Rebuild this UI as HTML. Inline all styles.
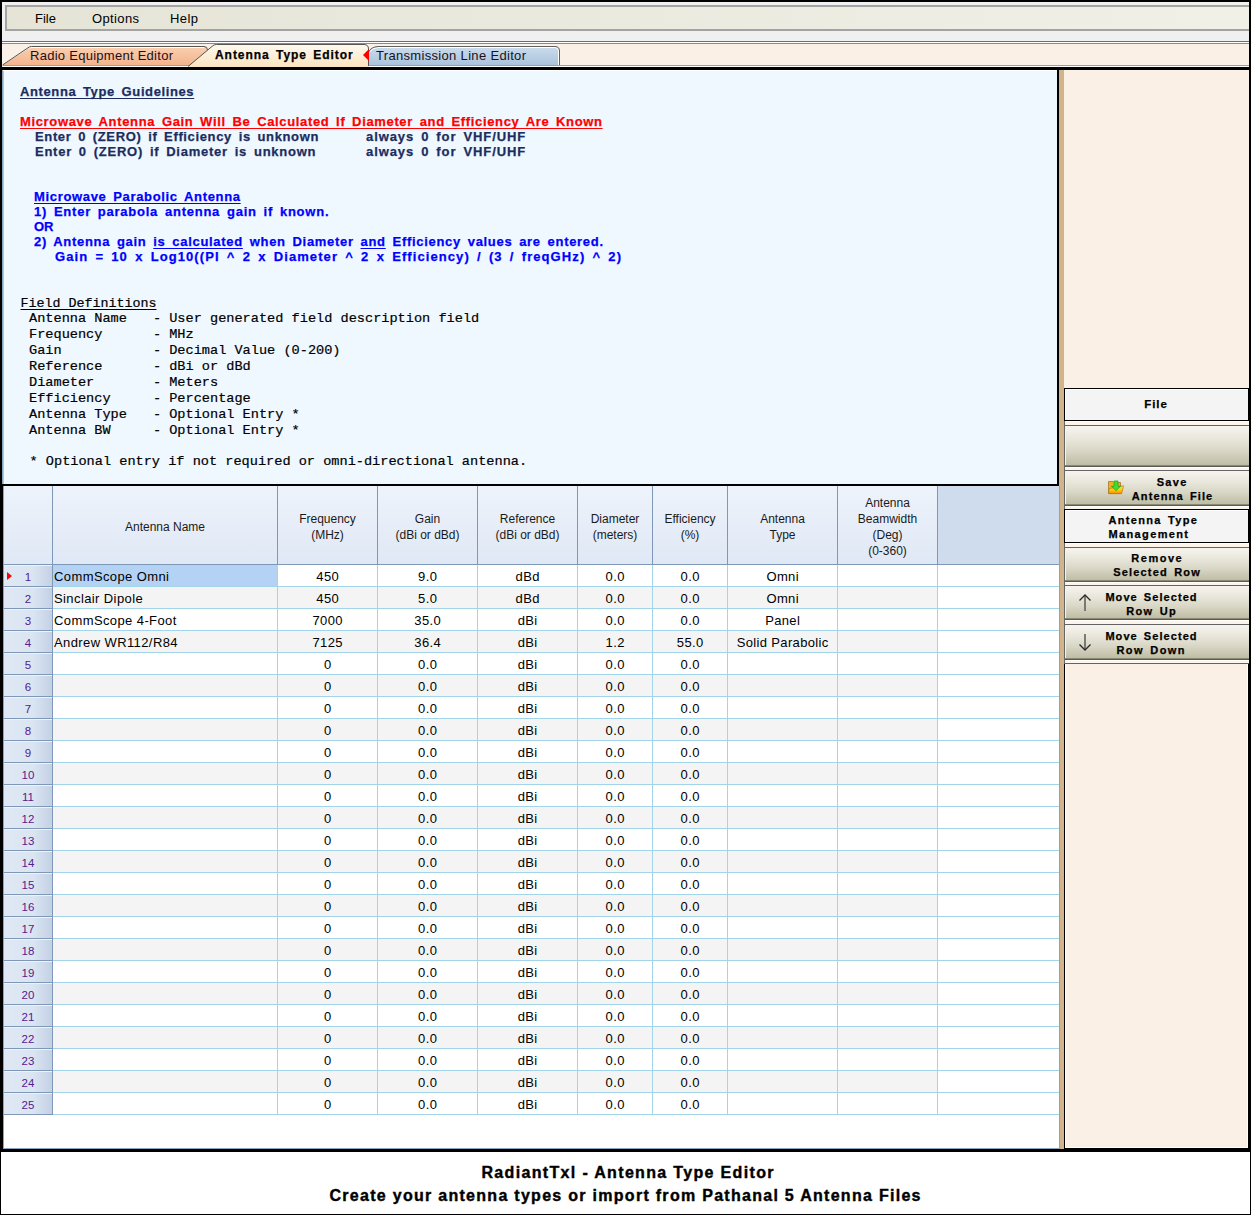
<!DOCTYPE html>
<html><head><meta charset="utf-8"><style>
html,body{margin:0;padding:0;width:1251px;height:1215px;overflow:hidden;background:#000}
.v{-webkit-text-stroke:0.25px currentColor}
.mo{-webkit-text-stroke:0.2px currentColor}
.t{position:absolute;line-height:0;white-space:pre;text-decoration-skip-ink:none;text-underline-offset:2px}
u{text-decoration-skip-ink:none;text-underline-offset:2px}
</style></head><body>
<div style="position:absolute;left:0px;top:0px;width:1251px;height:1215px;background:#000"></div>
<div style="position:absolute;left:2px;top:2px;width:1247px;height:39px;background:#f0f0f0"></div>
<div style="position:absolute;left:5px;top:5px;width:1244px;height:26px;background:linear-gradient(90deg,#e5e4d7,#f1f0e7);border:2px solid #a3a3a3;border-right:none;box-sizing:border-box"></div>
<div style="position:absolute;left:2px;top:41px;width:1247px;height:1px;background:#6e6e6e"></div>
<div style="position:absolute;left:2px;top:42px;width:1247px;height:1px;background:#ffffff"></div>
<div style="position:absolute;left:2px;top:43px;width:1247px;height:1px;background:#8a8a8a"></div>
<div style="position:absolute;left:2px;top:44px;width:1247px;height:23px;background:#faf0e6"></div>
<div style="position:absolute;left:3px;top:65px;width:1246px;height:1px;background:#7aa6c8"></div>
<div style="position:absolute;left:3px;top:66px;width:1246px;height:1px;background:#ffffff"></div>
<div style="position:absolute;left:0px;top:67px;width:1251px;height:3px;background:#000"></div>
<div class="t" id="m_file" style="left:35px;top:18.50px;font-size:13px;font-family:'Liberation Sans', sans-serif;font-weight:normal;color:#000;letter-spacing:0.015px;word-spacing:0px;">File</div>
<div class="t" id="m_opt" style="left:92px;top:18.50px;font-size:13px;font-family:'Liberation Sans', sans-serif;font-weight:normal;color:#000;letter-spacing:0.365px;word-spacing:0px;">Options</div>
<div class="t" id="m_help" style="left:170px;top:18.50px;font-size:13px;font-family:'Liberation Sans', sans-serif;font-weight:normal;color:#000;letter-spacing:0.42px;word-spacing:0px;">Help</div>
<svg style="position:absolute;left:0;top:40px" width="600" height="28" viewBox="0 40 600 28">
<defs>
<linearGradient id="gR" x1="0" y1="0" x2="0" y2="1"><stop offset="0" stop-color="#f9d0b2"/><stop offset="1" stop-color="#f4b48c"/></linearGradient>
<linearGradient id="gA" x1="0" y1="0" x2="0" y2="1"><stop offset="0" stop-color="#fef9ef"/><stop offset="1" stop-color="#fbe4c0"/></linearGradient>
<linearGradient id="gT" x1="0" y1="0" x2="0" y2="1"><stop offset="0" stop-color="#cbdcec"/><stop offset="1" stop-color="#aac4dc"/></linearGradient>
</defs>
<path d="M2.5,65 L28,47.8 Q29.5,46.5 31.5,46.5 L204,46.5 Q207.5,46.5 207.5,50 L207.5,65 Z" fill="url(#gR)"/>
<path d="M3.5,64 L28.5,48 Q30,47.5 32,47.5 L204,47.5" fill="none" stroke="#ffffff" stroke-width="1"/>
<path d="M2.5,65 L28,47.8 Q29.5,46.5 31.5,46.5 L204,46.5 Q207.5,46.5 207.5,50" fill="none" stroke="#555555" stroke-width="1"/>
<path d="M368.5,52 Q371,47 378,46.5 L555,46.5 Q559.5,46.5 559.5,51 L559.5,65 L368.5,65 Z" fill="url(#gT)"/>
<path d="M369.5,52 Q372,48 378,47.5 L555,47.5 Q558.5,47.5 558.5,51 L558.5,65" fill="none" stroke="#ffffff" stroke-width="1"/>
<path d="M368.5,52 Q371,47 378,46.5 L555,46.5 Q559.5,46.5 559.5,51 L559.5,65" fill="none" stroke="#606060" stroke-width="1"/>
<path d="M188,67 L213,45.6 Q214.5,44.5 216.5,44.5 L364,44.5 Q368.5,44.5 368.5,49 L368.5,67 Z" fill="url(#gA)"/>
<path d="M188,66.5 L213,45.6 Q214.5,44.5 216.5,44.5 L364,44.5 Q368.5,44.5 368.5,49 L368.5,66" fill="none" stroke="#555555" stroke-width="1"/>
<path d="M363,55 L369,49 L369,61 Z" fill="#ff0000"/>
</svg>
<div class="t" id="tab1" style="left:30px;top:55.50px;font-size:13px;font-family:'Liberation Sans', sans-serif;font-weight:normal;color:#1a1020;letter-spacing:0.271px;word-spacing:0px;">Radio Equipment Editor</div>
<div class="t v" id="tab2" style="left:215px;top:54.84px;font-size:12px;font-family:'Liberation Sans', sans-serif;font-weight:bold;color:#000;letter-spacing:0.958px;word-spacing:2px;">Antenna Type Editor</div>
<div class="t" id="tab3" style="left:376px;top:55.50px;font-size:13px;font-family:'Liberation Sans', sans-serif;font-weight:normal;color:#1a1020;letter-spacing:0.322px;word-spacing:0px;">Transmission Line Editor</div>
<div style="position:absolute;left:2px;top:70px;width:1055px;height:415px;background:#f0f8ff"></div>
<div style="position:absolute;left:2px;top:70px;width:1px;height:415px;background:#8aa4bc"></div>
<div style="position:absolute;left:3px;top:70px;width:1px;height:415px;background:#a8c8e8"></div>
<div style="position:absolute;left:3px;top:70px;width:1054px;height:1px;background:#ffffff"></div>
<div style="position:absolute;left:1057px;top:67px;width:2px;height:419px;background:#000"></div>
<div style="position:absolute;left:2px;top:484px;width:1057px;height:2px;background:#000"></div>
<div class="t v" id="g1" style="left:20px;top:91.50px;font-size:13px;font-family:'Liberation Sans', sans-serif;font-weight:bold;color:#1b2d60;letter-spacing:0.615px;word-spacing:2.5px;text-decoration:underline;text-underline-offset:2px">Antenna Type Guidelines</div>
<div class="t v" id="g2" style="left:20px;top:121.50px;font-size:13px;font-family:'Liberation Sans', sans-serif;font-weight:bold;color:#ff0000;letter-spacing:0.648px;word-spacing:2.5px;text-decoration:underline;text-underline-offset:2px">Microwave Antenna Gain Will Be Calculated If Diameter and Efficiency Are Known</div>
<div class="t v" id="g3" style="left:35px;top:136.50px;font-size:13px;font-family:'Liberation Sans', sans-serif;font-weight:bold;color:#1b2d60;letter-spacing:0.638px;word-spacing:2.5px;">Enter 0 (ZERO) if Efficiency is unknown</div>
<div class="t v" id="g4" style="left:366px;top:136.50px;font-size:13px;font-family:'Liberation Sans', sans-serif;font-weight:bold;color:#1b2d60;letter-spacing:0.917px;word-spacing:2.5px;">always 0 for VHF/UHF</div>
<div class="t v" id="g5" style="left:35px;top:151.50px;font-size:13px;font-family:'Liberation Sans', sans-serif;font-weight:bold;color:#1b2d60;letter-spacing:0.754px;word-spacing:2.5px;">Enter 0 (ZERO) if Diameter is unknown</div>
<div class="t v" id="g6" style="left:366px;top:151.50px;font-size:13px;font-family:'Liberation Sans', sans-serif;font-weight:bold;color:#1b2d60;letter-spacing:0.917px;word-spacing:2.5px;">always 0 for VHF/UHF</div>
<div class="t v" id="g7" style="left:34px;top:196.50px;font-size:13px;font-family:'Liberation Sans', sans-serif;font-weight:bold;color:#0000ff;letter-spacing:0.664px;word-spacing:2.5px;text-decoration:underline;text-underline-offset:2px">Microwave Parabolic Antenna</div>
<div class="t v" id="g8" style="left:34px;top:211.50px;font-size:13px;font-family:'Liberation Sans', sans-serif;font-weight:bold;color:#0000ff;letter-spacing:0.758px;word-spacing:2.5px;">1) Enter parabola antenna gain if known.</div>
<div class="t v" id="g9" style="left:34px;top:226.50px;font-size:13px;font-family:'Liberation Sans', sans-serif;font-weight:bold;color:#0000ff;letter-spacing:0px;word-spacing:2.5px;">OR</div>

<div class="t v" id="g10" style="left:34px;top:241.50px;font-size:13px;font-family:'Liberation Sans', sans-serif;font-weight:bold;color:#0000ff;letter-spacing:0.696px;word-spacing:2.5px;">2) Antenna gain <u>is calculated</u> when Diameter <u>and</u> Efficiency values are entered.</div>
<div class="t v" id="g11" style="left:55px;top:256.50px;font-size:13px;font-family:'Liberation Sans', sans-serif;font-weight:bold;color:#0000ff;letter-spacing:1.085px;word-spacing:2.5px;">Gain = 10 x Log10((PI ^ 2 x Diameter ^ 2 x Efficiency) / (3 / freqGHz) ^ 2)</div>
<div class="t mo" id="f0" style="left:20.5px;top:304.45px;font-size:13.33px;font-family:'Liberation Mono', monospace;font-weight:normal;color:#000;letter-spacing:0px;word-spacing:0px;text-decoration:underline;text-underline-offset:2px">Field Definitions</div>
<div class="t mo" id="fn0" style="left:29px;top:319.38px;font-size:13.6px;font-family:'Liberation Mono', monospace;font-weight:normal;color:#000;letter-spacing:0px;word-spacing:0px;">Antenna Name</div>
<div class="t mo" id="fd0" style="left:152.9px;top:319.38px;font-size:13.6px;font-family:'Liberation Mono', monospace;font-weight:normal;color:#000;letter-spacing:0px;word-spacing:0px;">- User generated field description field</div>
<div class="t mo" id="fn1" style="left:29px;top:335.38px;font-size:13.6px;font-family:'Liberation Mono', monospace;font-weight:normal;color:#000;letter-spacing:0px;word-spacing:0px;">Frequency</div>
<div class="t mo" id="fd1" style="left:152.9px;top:335.38px;font-size:13.6px;font-family:'Liberation Mono', monospace;font-weight:normal;color:#000;letter-spacing:0px;word-spacing:0px;">- MHz</div>
<div class="t mo" id="fn2" style="left:29px;top:351.38px;font-size:13.6px;font-family:'Liberation Mono', monospace;font-weight:normal;color:#000;letter-spacing:0px;word-spacing:0px;">Gain</div>
<div class="t mo" id="fd2" style="left:152.9px;top:351.38px;font-size:13.6px;font-family:'Liberation Mono', monospace;font-weight:normal;color:#000;letter-spacing:0px;word-spacing:0px;">- Decimal Value (0-200)</div>
<div class="t mo" id="fn3" style="left:29px;top:367.38px;font-size:13.6px;font-family:'Liberation Mono', monospace;font-weight:normal;color:#000;letter-spacing:0px;word-spacing:0px;">Reference</div>
<div class="t mo" id="fd3" style="left:152.9px;top:367.38px;font-size:13.6px;font-family:'Liberation Mono', monospace;font-weight:normal;color:#000;letter-spacing:0px;word-spacing:0px;">- dBi or dBd</div>
<div class="t mo" id="fn4" style="left:29px;top:383.38px;font-size:13.6px;font-family:'Liberation Mono', monospace;font-weight:normal;color:#000;letter-spacing:0px;word-spacing:0px;">Diameter</div>
<div class="t mo" id="fd4" style="left:152.9px;top:383.38px;font-size:13.6px;font-family:'Liberation Mono', monospace;font-weight:normal;color:#000;letter-spacing:0px;word-spacing:0px;">- Meters</div>
<div class="t mo" id="fn5" style="left:29px;top:399.38px;font-size:13.6px;font-family:'Liberation Mono', monospace;font-weight:normal;color:#000;letter-spacing:0px;word-spacing:0px;">Efficiency</div>
<div class="t mo" id="fd5" style="left:152.9px;top:399.38px;font-size:13.6px;font-family:'Liberation Mono', monospace;font-weight:normal;color:#000;letter-spacing:0px;word-spacing:0px;">- Percentage</div>
<div class="t mo" id="fn6" style="left:29px;top:415.38px;font-size:13.6px;font-family:'Liberation Mono', monospace;font-weight:normal;color:#000;letter-spacing:0px;word-spacing:0px;">Antenna Type</div>
<div class="t mo" id="fd6" style="left:152.9px;top:415.38px;font-size:13.6px;font-family:'Liberation Mono', monospace;font-weight:normal;color:#000;letter-spacing:0px;word-spacing:0px;">- Optional Entry *</div>
<div class="t mo" id="fn7" style="left:29px;top:431.38px;font-size:13.6px;font-family:'Liberation Mono', monospace;font-weight:normal;color:#000;letter-spacing:0px;word-spacing:0px;">Antenna BW</div>
<div class="t mo" id="fd7" style="left:152.9px;top:431.38px;font-size:13.6px;font-family:'Liberation Mono', monospace;font-weight:normal;color:#000;letter-spacing:0px;word-spacing:0px;">- Optional Entry *</div>
<div class="t mo" id="f9" style="left:29.5px;top:462.38px;font-size:13.6px;font-family:'Liberation Mono', monospace;font-weight:normal;color:#000;letter-spacing:0px;word-spacing:0px;">* Optional entry if not required or omni-directional antenna.</div>
<div style="position:absolute;left:1059px;top:70px;width:190px;height:1079px;background:#faf0e6"></div>
<div style="position:absolute;left:1060px;top:70px;width:4px;height:1079px;background:#d2b48c"></div>
<div style="position:absolute;left:1059px;top:70px;width:1px;height:416px;background:#d2b48c"></div>
<div style="position:absolute;left:1064px;top:388px;width:185px;height:33px;background:#000"></div>
<div style="position:absolute;left:1065px;top:389px;width:183px;height:31px;background:#f4f4f4"></div>
<div style="position:absolute;left:1065px;top:389px;width:183px;height:1px;background:#ffffff"></div>
<div style="position:absolute;left:1065px;top:389px;width:1px;height:31px;background:#ffffff"></div>
<div style="position:absolute;left:1064px;top:421px;width:185px;height:4px;background:#fdf4ea"></div>
<div style="position:absolute;left:1065px;top:421px;width:184px;height:1px;background:#ffffff"></div>
<div style="position:absolute;left:1064px;top:421px;width:1px;height:4px;background:#666666"></div>
<div style="position:absolute;left:1064px;top:425px;width:185px;height:42px;background:linear-gradient(#f8f6f0 0%,#e8e6da 35%,#d6d4c2 65%,#bab99f 100%)"></div>
<div style="position:absolute;left:1064px;top:425px;width:185px;height:1px;background:#646464"></div>
<div style="position:absolute;left:1064px;top:465px;width:185px;height:1px;background:#8a8a74"></div>
<div style="position:absolute;left:1064px;top:466px;width:185px;height:1px;background:#5a5a5a"></div>
<div style="position:absolute;left:1064px;top:425px;width:1px;height:42px;background:#666666"></div>
<div style="position:absolute;left:1065px;top:426px;width:1px;height:39px;background:#f4f4ee"></div>
<div style="position:absolute;left:1064px;top:467px;width:185px;height:3px;background:#fdf4ea"></div>
<div style="position:absolute;left:1065px;top:467px;width:184px;height:1px;background:#ffffff"></div>
<div style="position:absolute;left:1064px;top:467px;width:1px;height:3px;background:#666666"></div>
<div style="position:absolute;left:1064px;top:470px;width:185px;height:36px;background:linear-gradient(#f8f6f0 0%,#e8e6da 35%,#d6d4c2 65%,#bab99f 100%)"></div>
<div style="position:absolute;left:1064px;top:470px;width:185px;height:1px;background:#646464"></div>
<div style="position:absolute;left:1064px;top:504px;width:185px;height:1px;background:#8a8a74"></div>
<div style="position:absolute;left:1064px;top:505px;width:185px;height:1px;background:#5a5a5a"></div>
<div style="position:absolute;left:1064px;top:470px;width:1px;height:36px;background:#666666"></div>
<div style="position:absolute;left:1065px;top:471px;width:1px;height:33px;background:#f4f4ee"></div>
<div style="position:absolute;left:1064px;top:506px;width:185px;height:3px;background:#fdf4ea"></div>
<div style="position:absolute;left:1065px;top:506px;width:184px;height:1px;background:#ffffff"></div>
<div style="position:absolute;left:1064px;top:506px;width:1px;height:3px;background:#666666"></div>
<div style="position:absolute;left:1064px;top:509px;width:185px;height:34px;background:#000"></div>
<div style="position:absolute;left:1065px;top:510px;width:183px;height:32px;background:#f4f4f4"></div>
<div style="position:absolute;left:1065px;top:510px;width:183px;height:1px;background:#ffffff"></div>
<div style="position:absolute;left:1065px;top:510px;width:1px;height:32px;background:#ffffff"></div>
<div style="position:absolute;left:1064px;top:543px;width:185px;height:4px;background:#fdf4ea"></div>
<div style="position:absolute;left:1065px;top:543px;width:184px;height:1px;background:#ffffff"></div>
<div style="position:absolute;left:1064px;top:543px;width:1px;height:4px;background:#666666"></div>
<div style="position:absolute;left:1064px;top:547px;width:185px;height:35px;background:linear-gradient(#f8f6f0 0%,#e8e6da 35%,#d6d4c2 65%,#bab99f 100%)"></div>
<div style="position:absolute;left:1064px;top:547px;width:185px;height:1px;background:#646464"></div>
<div style="position:absolute;left:1064px;top:580px;width:185px;height:1px;background:#8a8a74"></div>
<div style="position:absolute;left:1064px;top:581px;width:185px;height:1px;background:#5a5a5a"></div>
<div style="position:absolute;left:1064px;top:547px;width:1px;height:35px;background:#666666"></div>
<div style="position:absolute;left:1065px;top:548px;width:1px;height:32px;background:#f4f4ee"></div>
<div style="position:absolute;left:1064px;top:582px;width:185px;height:3px;background:#fdf4ea"></div>
<div style="position:absolute;left:1065px;top:582px;width:184px;height:1px;background:#ffffff"></div>
<div style="position:absolute;left:1064px;top:582px;width:1px;height:3px;background:#666666"></div>
<div style="position:absolute;left:1064px;top:585px;width:185px;height:35px;background:linear-gradient(#f8f6f0 0%,#e8e6da 35%,#d6d4c2 65%,#bab99f 100%)"></div>
<div style="position:absolute;left:1064px;top:585px;width:185px;height:1px;background:#646464"></div>
<div style="position:absolute;left:1064px;top:618px;width:185px;height:1px;background:#8a8a74"></div>
<div style="position:absolute;left:1064px;top:619px;width:185px;height:1px;background:#5a5a5a"></div>
<div style="position:absolute;left:1064px;top:585px;width:1px;height:35px;background:#666666"></div>
<div style="position:absolute;left:1065px;top:586px;width:1px;height:32px;background:#f4f4ee"></div>
<div style="position:absolute;left:1064px;top:620px;width:185px;height:4px;background:#fdf4ea"></div>
<div style="position:absolute;left:1065px;top:620px;width:184px;height:1px;background:#ffffff"></div>
<div style="position:absolute;left:1064px;top:620px;width:1px;height:4px;background:#666666"></div>
<div style="position:absolute;left:1064px;top:624px;width:185px;height:36px;background:linear-gradient(#f8f6f0 0%,#e8e6da 35%,#d6d4c2 65%,#bab99f 100%)"></div>
<div style="position:absolute;left:1064px;top:624px;width:185px;height:1px;background:#646464"></div>
<div style="position:absolute;left:1064px;top:658px;width:185px;height:1px;background:#8a8a74"></div>
<div style="position:absolute;left:1064px;top:659px;width:185px;height:1px;background:#5a5a5a"></div>
<div style="position:absolute;left:1064px;top:624px;width:1px;height:36px;background:#666666"></div>
<div style="position:absolute;left:1065px;top:625px;width:1px;height:33px;background:#f4f4ee"></div>
<div style="position:absolute;left:1064px;top:660px;width:185px;height:4px;background:#fdf4ea"></div>
<div style="position:absolute;left:1065px;top:660px;width:184px;height:1px;background:#ffffff"></div>
<div style="position:absolute;left:1064px;top:660px;width:1px;height:4px;background:#666666"></div>
<div style="position:absolute;left:1064px;top:663px;width:185px;height:1px;background:#646464"></div>
<div style="position:absolute;left:1064px;top:664px;width:185px;height:485px;background:#000"></div>
<div style="position:absolute;left:1065px;top:664px;width:183px;height:484px;background:#ffffff"></div>
<div style="position:absolute;left:1066px;top:664px;width:181px;height:483px;background:#faf0e6"></div>
<div class="t v" id="b_file" style="left:755.98px;width:800px;text-align:center;top:404.02px;font-size:11.5px;font-family:'Liberation Sans', sans-serif;font-weight:bold;color:#000;letter-spacing:0.961px;word-spacing:2px;">File</div>
<div class="t v" id="b_s1" style="left:772.17px;width:800px;text-align:center;top:481.79px;font-size:11px;font-family:'Liberation Sans', sans-serif;font-weight:bold;color:#000;letter-spacing:1.333px;word-spacing:2px;">Save</div>
<div class="t v" id="b_s2" style="left:772.57px;width:800px;text-align:center;top:495.79px;font-size:11px;font-family:'Liberation Sans', sans-serif;font-weight:bold;color:#000;letter-spacing:1.136px;word-spacing:2px;">Antenna File</div>
<div class="t v" id="b_t1" style="left:1108.5px;top:519.69px;font-size:11px;font-family:'Liberation Sans', sans-serif;font-weight:bold;color:#000;letter-spacing:1.308px;word-spacing:2px;">Antenna Type</div>
<div class="t v" id="b_t2" style="left:1108.5px;top:533.69px;font-size:11px;font-family:'Liberation Sans', sans-serif;font-weight:bold;color:#000;letter-spacing:1.362px;word-spacing:2px;">Management</div>
<div class="t v" id="b_r1" style="left:757.25px;width:800px;text-align:center;top:557.79px;font-size:11px;font-family:'Liberation Sans', sans-serif;font-weight:bold;color:#000;letter-spacing:1.499px;word-spacing:2px;">Remove</div>
<div class="t v" id="b_r2" style="left:757.10px;width:800px;text-align:center;top:571.89px;font-size:11px;font-family:'Liberation Sans', sans-serif;font-weight:bold;color:#000;letter-spacing:1.197px;word-spacing:2px;">Selected Row</div>
<div class="t v" id="b_u1" style="left:751.53px;width:800px;text-align:center;top:596.79px;font-size:11px;font-family:'Liberation Sans', sans-serif;font-weight:bold;color:#000;letter-spacing:1.065px;word-spacing:2px;">Move Selected</div>
<div class="t v" id="b_u2" style="left:751.67px;width:800px;text-align:center;top:610.89px;font-size:11px;font-family:'Liberation Sans', sans-serif;font-weight:bold;color:#000;letter-spacing:1.334px;word-spacing:2px;">Row Up</div>
<div class="t v" id="b_d1" style="left:751.53px;width:800px;text-align:center;top:635.79px;font-size:11px;font-family:'Liberation Sans', sans-serif;font-weight:bold;color:#000;letter-spacing:1.065px;word-spacing:2px;">Move Selected</div>
<div class="t v" id="b_d2" style="left:751.21px;width:800px;text-align:center;top:649.89px;font-size:11px;font-family:'Liberation Sans', sans-serif;font-weight:bold;color:#000;letter-spacing:1.411px;word-spacing:2px;">Row Down</div>
<svg style="position:absolute;left:1076px;top:592px" width="18" height="22"><path d="M9,3 L9,19" stroke="#606060" stroke-width="1.6" fill="none"/><path d="M3.5,8.5 L9,3 L14.5,8.5" stroke="#2a2a2a" stroke-width="1.3" fill="none"/></svg>
<svg style="position:absolute;left:1076px;top:631px" width="18" height="22"><path d="M9,3 L9,19" stroke="#606060" stroke-width="1.6" fill="none"/><path d="M3.5,13.5 L9,19 L14.5,13.5" stroke="#2a2a2a" stroke-width="1.3" fill="none"/></svg>
<svg style="position:absolute;left:1100px;top:472px" width="32" height="28"><defs><linearGradient id="fF" x1="0" y1="0" x2="0" y2="1"><stop offset="0" stop-color="#ffe84a"/><stop offset="0.6" stop-color="#ffc20a"/><stop offset="1" stop-color="#f08a00"/></linearGradient></defs><path d="M8.5,9.5 L13,9.5 L14,10.5 L20.5,10.5 L20.5,21.5 L8.5,21.5 Z" fill="#f2b21e" stroke="#a8782a" stroke-width="0.8"/><path d="M9.2,16.6 L23.5,13.8 L21.6,21.7 L8.6,21.7 Z" fill="url(#fF)" stroke="#b07a20" stroke-width="0.7"/><path d="M14,9 L18,9 L18,14.3 L20.6,14.3 L16,18.6 L11.4,14.3 L14,14.3 Z" fill="#44dc2c" stroke="#14a022" stroke-width="0.7"/></svg>
<div style="position:absolute;left:3px;top:486px;width:1057px;height:663px;background:#ffffff"></div>
<div style="position:absolute;left:3px;top:486px;width:1px;height:663px;background:#8aa4bc"></div>
<div style="position:absolute;left:1059px;top:486px;width:1px;height:663px;background:#8aa4bc"></div>
<div style="position:absolute;left:4px;top:486px;width:1055px;height:78px;background:linear-gradient(#eef3fb,#dfe8f5)"></div>
<div style="position:absolute;left:938px;top:486px;width:121px;height:78px;background:#cfdced"></div>
<div style="position:absolute;left:4px;top:564px;width:1055px;height:1px;background:#8098b8"></div>
<div style="position:absolute;left:52px;top:486px;width:1px;height:78px;background:#8098b8"></div>
<div style="position:absolute;left:277px;top:486px;width:1px;height:78px;background:#8098b8"></div>
<div style="position:absolute;left:377px;top:486px;width:1px;height:78px;background:#8098b8"></div>
<div style="position:absolute;left:477px;top:486px;width:1px;height:78px;background:#8098b8"></div>
<div style="position:absolute;left:577px;top:486px;width:1px;height:78px;background:#8098b8"></div>
<div style="position:absolute;left:652px;top:486px;width:1px;height:78px;background:#8098b8"></div>
<div style="position:absolute;left:727px;top:486px;width:1px;height:78px;background:#8098b8"></div>
<div style="position:absolute;left:837px;top:486px;width:1px;height:78px;background:#8098b8"></div>
<div style="position:absolute;left:937px;top:486px;width:1px;height:78px;background:#8098b8"></div>
<div class="t" id="t46" style="left:-235.00px;width:800px;text-align:center;top:526.84px;font-size:12px;font-family:'Liberation Sans', sans-serif;font-weight:normal;color:#1a1a1a;letter-spacing:0px;word-spacing:0px;">Antenna Name</div>
<div class="t" id="t47" style="left:-72.50px;width:800px;text-align:center;top:518.84px;font-size:12px;font-family:'Liberation Sans', sans-serif;font-weight:normal;color:#1a1a1a;letter-spacing:0px;word-spacing:0px;">Frequency</div>
<div class="t" id="t48" style="left:-72.50px;width:800px;text-align:center;top:534.84px;font-size:12px;font-family:'Liberation Sans', sans-serif;font-weight:normal;color:#1a1a1a;letter-spacing:0px;word-spacing:0px;">(MHz)</div>
<div class="t" id="t49" style="left:27.50px;width:800px;text-align:center;top:518.84px;font-size:12px;font-family:'Liberation Sans', sans-serif;font-weight:normal;color:#1a1a1a;letter-spacing:0px;word-spacing:0px;">Gain</div>
<div class="t" id="t50" style="left:27.50px;width:800px;text-align:center;top:534.84px;font-size:12px;font-family:'Liberation Sans', sans-serif;font-weight:normal;color:#1a1a1a;letter-spacing:0px;word-spacing:0px;">(dBi or dBd)</div>
<div class="t" id="t51" style="left:127.50px;width:800px;text-align:center;top:518.84px;font-size:12px;font-family:'Liberation Sans', sans-serif;font-weight:normal;color:#1a1a1a;letter-spacing:0px;word-spacing:0px;">Reference</div>
<div class="t" id="t52" style="left:127.50px;width:800px;text-align:center;top:534.84px;font-size:12px;font-family:'Liberation Sans', sans-serif;font-weight:normal;color:#1a1a1a;letter-spacing:0px;word-spacing:0px;">(dBi or dBd)</div>
<div class="t" id="t53" style="left:215.00px;width:800px;text-align:center;top:518.84px;font-size:12px;font-family:'Liberation Sans', sans-serif;font-weight:normal;color:#1a1a1a;letter-spacing:0px;word-spacing:0px;">Diameter</div>
<div class="t" id="t54" style="left:215.00px;width:800px;text-align:center;top:534.84px;font-size:12px;font-family:'Liberation Sans', sans-serif;font-weight:normal;color:#1a1a1a;letter-spacing:0px;word-spacing:0px;">(meters)</div>
<div class="t" id="t55" style="left:290.00px;width:800px;text-align:center;top:518.84px;font-size:12px;font-family:'Liberation Sans', sans-serif;font-weight:normal;color:#1a1a1a;letter-spacing:0px;word-spacing:0px;">Efficiency</div>
<div class="t" id="t56" style="left:290.00px;width:800px;text-align:center;top:534.84px;font-size:12px;font-family:'Liberation Sans', sans-serif;font-weight:normal;color:#1a1a1a;letter-spacing:0px;word-spacing:0px;">(%)</div>
<div class="t" id="t57" style="left:382.50px;width:800px;text-align:center;top:518.84px;font-size:12px;font-family:'Liberation Sans', sans-serif;font-weight:normal;color:#1a1a1a;letter-spacing:0px;word-spacing:0px;">Antenna</div>
<div class="t" id="t58" style="left:382.50px;width:800px;text-align:center;top:534.84px;font-size:12px;font-family:'Liberation Sans', sans-serif;font-weight:normal;color:#1a1a1a;letter-spacing:0px;word-spacing:0px;">Type</div>
<div class="t" id="t59" style="left:487.50px;width:800px;text-align:center;top:502.84px;font-size:12px;font-family:'Liberation Sans', sans-serif;font-weight:normal;color:#1a1a1a;letter-spacing:0px;word-spacing:0px;">Antenna</div>
<div class="t" id="t60" style="left:487.50px;width:800px;text-align:center;top:518.84px;font-size:12px;font-family:'Liberation Sans', sans-serif;font-weight:normal;color:#1a1a1a;letter-spacing:0px;word-spacing:0px;">Beamwidth</div>
<div class="t" id="t61" style="left:487.50px;width:800px;text-align:center;top:534.84px;font-size:12px;font-family:'Liberation Sans', sans-serif;font-weight:normal;color:#1a1a1a;letter-spacing:0px;word-spacing:0px;">(Deg)</div>
<div class="t" id="t62" style="left:487.50px;width:800px;text-align:center;top:550.84px;font-size:12px;font-family:'Liberation Sans', sans-serif;font-weight:normal;color:#1a1a1a;letter-spacing:0px;word-spacing:0px;">(0-360)</div>
<div style="position:absolute;left:4px;top:565px;width:48px;height:21px;background:linear-gradient(90deg,#dfe8f4 0%,#dbe5f2 60%,#c3d1e5 100%)"></div>
<div style="position:absolute;left:4px;top:565px;width:48px;height:1px;background:#eef3fa"></div>
<div style="position:absolute;left:4px;top:586px;width:48px;height:1px;background:#8098b8"></div>
<div style="position:absolute;left:53px;top:586px;width:1006px;height:1px;background:#a2d4ea"></div>
<div class="t" id="t63" style="left:-372.00px;width:800px;text-align:center;top:576.52px;font-size:11.5px;font-family:'Liberation Sans', sans-serif;font-weight:normal;color:#55208e;letter-spacing:0px;word-spacing:0px;">1</div>
<div style="position:absolute;left:53px;top:565px;width:224px;height:21px;background:#b4d3f4"></div>
<div class="t" id="n0" style="left:54px;top:576.50px;font-size:13px;font-family:'Liberation Sans', sans-serif;font-weight:normal;color:#000;letter-spacing:0.4px;word-spacing:0px;">CommScope Omni</div>
<div class="t" id="t65" style="left:-72.33px;width:800px;text-align:center;top:576.50px;font-size:13px;font-family:'Liberation Sans', sans-serif;font-weight:normal;color:#000;letter-spacing:0.35px;word-spacing:0px;">450</div>
<div class="t" id="t66" style="left:27.68px;width:800px;text-align:center;top:576.50px;font-size:13px;font-family:'Liberation Sans', sans-serif;font-weight:normal;color:#000;letter-spacing:0.35px;word-spacing:0px;">9.0</div>
<div class="t" id="t67" style="left:127.67px;width:800px;text-align:center;top:576.50px;font-size:13px;font-family:'Liberation Sans', sans-serif;font-weight:normal;color:#000;letter-spacing:0.35px;word-spacing:0px;">dBd</div>
<div class="t" id="t68" style="left:215.18px;width:800px;text-align:center;top:576.50px;font-size:13px;font-family:'Liberation Sans', sans-serif;font-weight:normal;color:#000;letter-spacing:0.35px;word-spacing:0px;">0.0</div>
<div class="t" id="t69" style="left:290.18px;width:800px;text-align:center;top:576.50px;font-size:13px;font-family:'Liberation Sans', sans-serif;font-weight:normal;color:#000;letter-spacing:0.35px;word-spacing:0px;">0.0</div>
<div class="t" id="t70" style="left:382.68px;width:800px;text-align:center;top:576.50px;font-size:13px;font-family:'Liberation Sans', sans-serif;font-weight:normal;color:#000;letter-spacing:0.35px;word-spacing:0px;">Omni</div>
<div style="position:absolute;left:53px;top:587px;width:885px;height:21px;background:#f4f4f4"></div>
<div style="position:absolute;left:4px;top:587px;width:48px;height:21px;background:linear-gradient(90deg,#dfe8f4 0%,#dbe5f2 60%,#c3d1e5 100%)"></div>
<div style="position:absolute;left:4px;top:587px;width:48px;height:1px;background:#eef3fa"></div>
<div style="position:absolute;left:4px;top:608px;width:48px;height:1px;background:#8098b8"></div>
<div style="position:absolute;left:53px;top:608px;width:1006px;height:1px;background:#a2d4ea"></div>
<div class="t" id="t71" style="left:-372.00px;width:800px;text-align:center;top:598.52px;font-size:11.5px;font-family:'Liberation Sans', sans-serif;font-weight:normal;color:#55208e;letter-spacing:0px;word-spacing:0px;">2</div>
<div class="t" id="n1" style="left:54px;top:598.50px;font-size:13px;font-family:'Liberation Sans', sans-serif;font-weight:normal;color:#000;letter-spacing:0.4px;word-spacing:0px;">Sinclair Dipole</div>
<div class="t" id="t73" style="left:-72.33px;width:800px;text-align:center;top:598.50px;font-size:13px;font-family:'Liberation Sans', sans-serif;font-weight:normal;color:#000;letter-spacing:0.35px;word-spacing:0px;">450</div>
<div class="t" id="t74" style="left:27.68px;width:800px;text-align:center;top:598.50px;font-size:13px;font-family:'Liberation Sans', sans-serif;font-weight:normal;color:#000;letter-spacing:0.35px;word-spacing:0px;">5.0</div>
<div class="t" id="t75" style="left:127.67px;width:800px;text-align:center;top:598.50px;font-size:13px;font-family:'Liberation Sans', sans-serif;font-weight:normal;color:#000;letter-spacing:0.35px;word-spacing:0px;">dBd</div>
<div class="t" id="t76" style="left:215.18px;width:800px;text-align:center;top:598.50px;font-size:13px;font-family:'Liberation Sans', sans-serif;font-weight:normal;color:#000;letter-spacing:0.35px;word-spacing:0px;">0.0</div>
<div class="t" id="t77" style="left:290.18px;width:800px;text-align:center;top:598.50px;font-size:13px;font-family:'Liberation Sans', sans-serif;font-weight:normal;color:#000;letter-spacing:0.35px;word-spacing:0px;">0.0</div>
<div class="t" id="t78" style="left:382.68px;width:800px;text-align:center;top:598.50px;font-size:13px;font-family:'Liberation Sans', sans-serif;font-weight:normal;color:#000;letter-spacing:0.35px;word-spacing:0px;">Omni</div>
<div style="position:absolute;left:4px;top:609px;width:48px;height:21px;background:linear-gradient(90deg,#dfe8f4 0%,#dbe5f2 60%,#c3d1e5 100%)"></div>
<div style="position:absolute;left:4px;top:609px;width:48px;height:1px;background:#eef3fa"></div>
<div style="position:absolute;left:4px;top:630px;width:48px;height:1px;background:#8098b8"></div>
<div style="position:absolute;left:53px;top:630px;width:1006px;height:1px;background:#a2d4ea"></div>
<div class="t" id="t79" style="left:-372.00px;width:800px;text-align:center;top:620.52px;font-size:11.5px;font-family:'Liberation Sans', sans-serif;font-weight:normal;color:#55208e;letter-spacing:0px;word-spacing:0px;">3</div>
<div class="t" id="n2" style="left:54px;top:620.50px;font-size:13px;font-family:'Liberation Sans', sans-serif;font-weight:normal;color:#000;letter-spacing:0.4px;word-spacing:0px;">CommScope 4-Foot</div>
<div class="t" id="t81" style="left:-72.33px;width:800px;text-align:center;top:620.50px;font-size:13px;font-family:'Liberation Sans', sans-serif;font-weight:normal;color:#000;letter-spacing:0.35px;word-spacing:0px;">7000</div>
<div class="t" id="t82" style="left:27.68px;width:800px;text-align:center;top:620.50px;font-size:13px;font-family:'Liberation Sans', sans-serif;font-weight:normal;color:#000;letter-spacing:0.35px;word-spacing:0px;">35.0</div>
<div class="t" id="t83" style="left:127.67px;width:800px;text-align:center;top:620.50px;font-size:13px;font-family:'Liberation Sans', sans-serif;font-weight:normal;color:#000;letter-spacing:0.35px;word-spacing:0px;">dBi</div>
<div class="t" id="t84" style="left:215.18px;width:800px;text-align:center;top:620.50px;font-size:13px;font-family:'Liberation Sans', sans-serif;font-weight:normal;color:#000;letter-spacing:0.35px;word-spacing:0px;">0.0</div>
<div class="t" id="t85" style="left:290.18px;width:800px;text-align:center;top:620.50px;font-size:13px;font-family:'Liberation Sans', sans-serif;font-weight:normal;color:#000;letter-spacing:0.35px;word-spacing:0px;">0.0</div>
<div class="t" id="t86" style="left:382.68px;width:800px;text-align:center;top:620.50px;font-size:13px;font-family:'Liberation Sans', sans-serif;font-weight:normal;color:#000;letter-spacing:0.35px;word-spacing:0px;">Panel</div>
<div style="position:absolute;left:53px;top:631px;width:885px;height:21px;background:#f4f4f4"></div>
<div style="position:absolute;left:4px;top:631px;width:48px;height:21px;background:linear-gradient(90deg,#dfe8f4 0%,#dbe5f2 60%,#c3d1e5 100%)"></div>
<div style="position:absolute;left:4px;top:631px;width:48px;height:1px;background:#eef3fa"></div>
<div style="position:absolute;left:4px;top:652px;width:48px;height:1px;background:#8098b8"></div>
<div style="position:absolute;left:53px;top:652px;width:1006px;height:1px;background:#a2d4ea"></div>
<div class="t" id="t87" style="left:-372.00px;width:800px;text-align:center;top:642.52px;font-size:11.5px;font-family:'Liberation Sans', sans-serif;font-weight:normal;color:#55208e;letter-spacing:0px;word-spacing:0px;">4</div>
<div class="t" id="n3" style="left:54px;top:642.50px;font-size:13px;font-family:'Liberation Sans', sans-serif;font-weight:normal;color:#000;letter-spacing:0.4px;word-spacing:0px;">Andrew WR112/R84</div>
<div class="t" id="t89" style="left:-72.33px;width:800px;text-align:center;top:642.50px;font-size:13px;font-family:'Liberation Sans', sans-serif;font-weight:normal;color:#000;letter-spacing:0.35px;word-spacing:0px;">7125</div>
<div class="t" id="t90" style="left:27.68px;width:800px;text-align:center;top:642.50px;font-size:13px;font-family:'Liberation Sans', sans-serif;font-weight:normal;color:#000;letter-spacing:0.35px;word-spacing:0px;">36.4</div>
<div class="t" id="t91" style="left:127.67px;width:800px;text-align:center;top:642.50px;font-size:13px;font-family:'Liberation Sans', sans-serif;font-weight:normal;color:#000;letter-spacing:0.35px;word-spacing:0px;">dBi</div>
<div class="t" id="t92" style="left:215.18px;width:800px;text-align:center;top:642.50px;font-size:13px;font-family:'Liberation Sans', sans-serif;font-weight:normal;color:#000;letter-spacing:0.35px;word-spacing:0px;">1.2</div>
<div class="t" id="t93" style="left:290.18px;width:800px;text-align:center;top:642.50px;font-size:13px;font-family:'Liberation Sans', sans-serif;font-weight:normal;color:#000;letter-spacing:0.35px;word-spacing:0px;">55.0</div>
<div class="t" id="t94" style="left:382.68px;width:800px;text-align:center;top:642.50px;font-size:13px;font-family:'Liberation Sans', sans-serif;font-weight:normal;color:#000;letter-spacing:0.35px;word-spacing:0px;">Solid Parabolic</div>
<div style="position:absolute;left:4px;top:653px;width:48px;height:21px;background:linear-gradient(90deg,#dfe8f4 0%,#dbe5f2 60%,#c3d1e5 100%)"></div>
<div style="position:absolute;left:4px;top:653px;width:48px;height:1px;background:#eef3fa"></div>
<div style="position:absolute;left:4px;top:674px;width:48px;height:1px;background:#8098b8"></div>
<div style="position:absolute;left:53px;top:674px;width:1006px;height:1px;background:#a2d4ea"></div>
<div class="t" id="t95" style="left:-372.00px;width:800px;text-align:center;top:664.52px;font-size:11.5px;font-family:'Liberation Sans', sans-serif;font-weight:normal;color:#55208e;letter-spacing:0px;word-spacing:0px;">5</div>
<div class="t" id="n4" style="left:54px;top:664.50px;font-size:13px;font-family:'Liberation Sans', sans-serif;font-weight:normal;color:#000;letter-spacing:0.4px;word-spacing:0px;"></div>
<div class="t" id="t97" style="left:-72.33px;width:800px;text-align:center;top:664.50px;font-size:13px;font-family:'Liberation Sans', sans-serif;font-weight:normal;color:#000;letter-spacing:0.35px;word-spacing:0px;">0</div>
<div class="t" id="t98" style="left:27.68px;width:800px;text-align:center;top:664.50px;font-size:13px;font-family:'Liberation Sans', sans-serif;font-weight:normal;color:#000;letter-spacing:0.35px;word-spacing:0px;">0.0</div>
<div class="t" id="t99" style="left:127.67px;width:800px;text-align:center;top:664.50px;font-size:13px;font-family:'Liberation Sans', sans-serif;font-weight:normal;color:#000;letter-spacing:0.35px;word-spacing:0px;">dBi</div>
<div class="t" id="t100" style="left:215.18px;width:800px;text-align:center;top:664.50px;font-size:13px;font-family:'Liberation Sans', sans-serif;font-weight:normal;color:#000;letter-spacing:0.35px;word-spacing:0px;">0.0</div>
<div class="t" id="t101" style="left:290.18px;width:800px;text-align:center;top:664.50px;font-size:13px;font-family:'Liberation Sans', sans-serif;font-weight:normal;color:#000;letter-spacing:0.35px;word-spacing:0px;">0.0</div>
<div style="position:absolute;left:53px;top:675px;width:885px;height:21px;background:#f4f4f4"></div>
<div style="position:absolute;left:4px;top:675px;width:48px;height:21px;background:linear-gradient(90deg,#dfe8f4 0%,#dbe5f2 60%,#c3d1e5 100%)"></div>
<div style="position:absolute;left:4px;top:675px;width:48px;height:1px;background:#eef3fa"></div>
<div style="position:absolute;left:4px;top:696px;width:48px;height:1px;background:#8098b8"></div>
<div style="position:absolute;left:53px;top:696px;width:1006px;height:1px;background:#a2d4ea"></div>
<div class="t" id="t102" style="left:-372.00px;width:800px;text-align:center;top:686.52px;font-size:11.5px;font-family:'Liberation Sans', sans-serif;font-weight:normal;color:#55208e;letter-spacing:0px;word-spacing:0px;">6</div>
<div class="t" id="n5" style="left:54px;top:686.50px;font-size:13px;font-family:'Liberation Sans', sans-serif;font-weight:normal;color:#000;letter-spacing:0.4px;word-spacing:0px;"></div>
<div class="t" id="t104" style="left:-72.33px;width:800px;text-align:center;top:686.50px;font-size:13px;font-family:'Liberation Sans', sans-serif;font-weight:normal;color:#000;letter-spacing:0.35px;word-spacing:0px;">0</div>
<div class="t" id="t105" style="left:27.68px;width:800px;text-align:center;top:686.50px;font-size:13px;font-family:'Liberation Sans', sans-serif;font-weight:normal;color:#000;letter-spacing:0.35px;word-spacing:0px;">0.0</div>
<div class="t" id="t106" style="left:127.67px;width:800px;text-align:center;top:686.50px;font-size:13px;font-family:'Liberation Sans', sans-serif;font-weight:normal;color:#000;letter-spacing:0.35px;word-spacing:0px;">dBi</div>
<div class="t" id="t107" style="left:215.18px;width:800px;text-align:center;top:686.50px;font-size:13px;font-family:'Liberation Sans', sans-serif;font-weight:normal;color:#000;letter-spacing:0.35px;word-spacing:0px;">0.0</div>
<div class="t" id="t108" style="left:290.18px;width:800px;text-align:center;top:686.50px;font-size:13px;font-family:'Liberation Sans', sans-serif;font-weight:normal;color:#000;letter-spacing:0.35px;word-spacing:0px;">0.0</div>
<div style="position:absolute;left:4px;top:697px;width:48px;height:21px;background:linear-gradient(90deg,#dfe8f4 0%,#dbe5f2 60%,#c3d1e5 100%)"></div>
<div style="position:absolute;left:4px;top:697px;width:48px;height:1px;background:#eef3fa"></div>
<div style="position:absolute;left:4px;top:718px;width:48px;height:1px;background:#8098b8"></div>
<div style="position:absolute;left:53px;top:718px;width:1006px;height:1px;background:#a2d4ea"></div>
<div class="t" id="t109" style="left:-372.00px;width:800px;text-align:center;top:708.52px;font-size:11.5px;font-family:'Liberation Sans', sans-serif;font-weight:normal;color:#55208e;letter-spacing:0px;word-spacing:0px;">7</div>
<div class="t" id="n6" style="left:54px;top:708.50px;font-size:13px;font-family:'Liberation Sans', sans-serif;font-weight:normal;color:#000;letter-spacing:0.4px;word-spacing:0px;"></div>
<div class="t" id="t111" style="left:-72.33px;width:800px;text-align:center;top:708.50px;font-size:13px;font-family:'Liberation Sans', sans-serif;font-weight:normal;color:#000;letter-spacing:0.35px;word-spacing:0px;">0</div>
<div class="t" id="t112" style="left:27.68px;width:800px;text-align:center;top:708.50px;font-size:13px;font-family:'Liberation Sans', sans-serif;font-weight:normal;color:#000;letter-spacing:0.35px;word-spacing:0px;">0.0</div>
<div class="t" id="t113" style="left:127.67px;width:800px;text-align:center;top:708.50px;font-size:13px;font-family:'Liberation Sans', sans-serif;font-weight:normal;color:#000;letter-spacing:0.35px;word-spacing:0px;">dBi</div>
<div class="t" id="t114" style="left:215.18px;width:800px;text-align:center;top:708.50px;font-size:13px;font-family:'Liberation Sans', sans-serif;font-weight:normal;color:#000;letter-spacing:0.35px;word-spacing:0px;">0.0</div>
<div class="t" id="t115" style="left:290.18px;width:800px;text-align:center;top:708.50px;font-size:13px;font-family:'Liberation Sans', sans-serif;font-weight:normal;color:#000;letter-spacing:0.35px;word-spacing:0px;">0.0</div>
<div style="position:absolute;left:53px;top:719px;width:885px;height:21px;background:#f4f4f4"></div>
<div style="position:absolute;left:4px;top:719px;width:48px;height:21px;background:linear-gradient(90deg,#dfe8f4 0%,#dbe5f2 60%,#c3d1e5 100%)"></div>
<div style="position:absolute;left:4px;top:719px;width:48px;height:1px;background:#eef3fa"></div>
<div style="position:absolute;left:4px;top:740px;width:48px;height:1px;background:#8098b8"></div>
<div style="position:absolute;left:53px;top:740px;width:1006px;height:1px;background:#a2d4ea"></div>
<div class="t" id="t116" style="left:-372.00px;width:800px;text-align:center;top:730.52px;font-size:11.5px;font-family:'Liberation Sans', sans-serif;font-weight:normal;color:#55208e;letter-spacing:0px;word-spacing:0px;">8</div>
<div class="t" id="n7" style="left:54px;top:730.50px;font-size:13px;font-family:'Liberation Sans', sans-serif;font-weight:normal;color:#000;letter-spacing:0.4px;word-spacing:0px;"></div>
<div class="t" id="t118" style="left:-72.33px;width:800px;text-align:center;top:730.50px;font-size:13px;font-family:'Liberation Sans', sans-serif;font-weight:normal;color:#000;letter-spacing:0.35px;word-spacing:0px;">0</div>
<div class="t" id="t119" style="left:27.68px;width:800px;text-align:center;top:730.50px;font-size:13px;font-family:'Liberation Sans', sans-serif;font-weight:normal;color:#000;letter-spacing:0.35px;word-spacing:0px;">0.0</div>
<div class="t" id="t120" style="left:127.67px;width:800px;text-align:center;top:730.50px;font-size:13px;font-family:'Liberation Sans', sans-serif;font-weight:normal;color:#000;letter-spacing:0.35px;word-spacing:0px;">dBi</div>
<div class="t" id="t121" style="left:215.18px;width:800px;text-align:center;top:730.50px;font-size:13px;font-family:'Liberation Sans', sans-serif;font-weight:normal;color:#000;letter-spacing:0.35px;word-spacing:0px;">0.0</div>
<div class="t" id="t122" style="left:290.18px;width:800px;text-align:center;top:730.50px;font-size:13px;font-family:'Liberation Sans', sans-serif;font-weight:normal;color:#000;letter-spacing:0.35px;word-spacing:0px;">0.0</div>
<div style="position:absolute;left:4px;top:741px;width:48px;height:21px;background:linear-gradient(90deg,#dfe8f4 0%,#dbe5f2 60%,#c3d1e5 100%)"></div>
<div style="position:absolute;left:4px;top:741px;width:48px;height:1px;background:#eef3fa"></div>
<div style="position:absolute;left:4px;top:762px;width:48px;height:1px;background:#8098b8"></div>
<div style="position:absolute;left:53px;top:762px;width:1006px;height:1px;background:#a2d4ea"></div>
<div class="t" id="t123" style="left:-372.00px;width:800px;text-align:center;top:752.52px;font-size:11.5px;font-family:'Liberation Sans', sans-serif;font-weight:normal;color:#55208e;letter-spacing:0px;word-spacing:0px;">9</div>
<div class="t" id="n8" style="left:54px;top:752.50px;font-size:13px;font-family:'Liberation Sans', sans-serif;font-weight:normal;color:#000;letter-spacing:0.4px;word-spacing:0px;"></div>
<div class="t" id="t125" style="left:-72.33px;width:800px;text-align:center;top:752.50px;font-size:13px;font-family:'Liberation Sans', sans-serif;font-weight:normal;color:#000;letter-spacing:0.35px;word-spacing:0px;">0</div>
<div class="t" id="t126" style="left:27.68px;width:800px;text-align:center;top:752.50px;font-size:13px;font-family:'Liberation Sans', sans-serif;font-weight:normal;color:#000;letter-spacing:0.35px;word-spacing:0px;">0.0</div>
<div class="t" id="t127" style="left:127.67px;width:800px;text-align:center;top:752.50px;font-size:13px;font-family:'Liberation Sans', sans-serif;font-weight:normal;color:#000;letter-spacing:0.35px;word-spacing:0px;">dBi</div>
<div class="t" id="t128" style="left:215.18px;width:800px;text-align:center;top:752.50px;font-size:13px;font-family:'Liberation Sans', sans-serif;font-weight:normal;color:#000;letter-spacing:0.35px;word-spacing:0px;">0.0</div>
<div class="t" id="t129" style="left:290.18px;width:800px;text-align:center;top:752.50px;font-size:13px;font-family:'Liberation Sans', sans-serif;font-weight:normal;color:#000;letter-spacing:0.35px;word-spacing:0px;">0.0</div>
<div style="position:absolute;left:53px;top:763px;width:885px;height:21px;background:#f4f4f4"></div>
<div style="position:absolute;left:4px;top:763px;width:48px;height:21px;background:linear-gradient(90deg,#dfe8f4 0%,#dbe5f2 60%,#c3d1e5 100%)"></div>
<div style="position:absolute;left:4px;top:763px;width:48px;height:1px;background:#eef3fa"></div>
<div style="position:absolute;left:4px;top:784px;width:48px;height:1px;background:#8098b8"></div>
<div style="position:absolute;left:53px;top:784px;width:1006px;height:1px;background:#a2d4ea"></div>
<div class="t" id="t130" style="left:-372.00px;width:800px;text-align:center;top:774.52px;font-size:11.5px;font-family:'Liberation Sans', sans-serif;font-weight:normal;color:#55208e;letter-spacing:0px;word-spacing:0px;">10</div>
<div class="t" id="n9" style="left:54px;top:774.50px;font-size:13px;font-family:'Liberation Sans', sans-serif;font-weight:normal;color:#000;letter-spacing:0.4px;word-spacing:0px;"></div>
<div class="t" id="t132" style="left:-72.33px;width:800px;text-align:center;top:774.50px;font-size:13px;font-family:'Liberation Sans', sans-serif;font-weight:normal;color:#000;letter-spacing:0.35px;word-spacing:0px;">0</div>
<div class="t" id="t133" style="left:27.68px;width:800px;text-align:center;top:774.50px;font-size:13px;font-family:'Liberation Sans', sans-serif;font-weight:normal;color:#000;letter-spacing:0.35px;word-spacing:0px;">0.0</div>
<div class="t" id="t134" style="left:127.67px;width:800px;text-align:center;top:774.50px;font-size:13px;font-family:'Liberation Sans', sans-serif;font-weight:normal;color:#000;letter-spacing:0.35px;word-spacing:0px;">dBi</div>
<div class="t" id="t135" style="left:215.18px;width:800px;text-align:center;top:774.50px;font-size:13px;font-family:'Liberation Sans', sans-serif;font-weight:normal;color:#000;letter-spacing:0.35px;word-spacing:0px;">0.0</div>
<div class="t" id="t136" style="left:290.18px;width:800px;text-align:center;top:774.50px;font-size:13px;font-family:'Liberation Sans', sans-serif;font-weight:normal;color:#000;letter-spacing:0.35px;word-spacing:0px;">0.0</div>
<div style="position:absolute;left:4px;top:785px;width:48px;height:21px;background:linear-gradient(90deg,#dfe8f4 0%,#dbe5f2 60%,#c3d1e5 100%)"></div>
<div style="position:absolute;left:4px;top:785px;width:48px;height:1px;background:#eef3fa"></div>
<div style="position:absolute;left:4px;top:806px;width:48px;height:1px;background:#8098b8"></div>
<div style="position:absolute;left:53px;top:806px;width:1006px;height:1px;background:#a2d4ea"></div>
<div class="t" id="t137" style="left:-372.00px;width:800px;text-align:center;top:796.52px;font-size:11.5px;font-family:'Liberation Sans', sans-serif;font-weight:normal;color:#55208e;letter-spacing:0px;word-spacing:0px;">11</div>
<div class="t" id="n10" style="left:54px;top:796.50px;font-size:13px;font-family:'Liberation Sans', sans-serif;font-weight:normal;color:#000;letter-spacing:0.4px;word-spacing:0px;"></div>
<div class="t" id="t139" style="left:-72.33px;width:800px;text-align:center;top:796.50px;font-size:13px;font-family:'Liberation Sans', sans-serif;font-weight:normal;color:#000;letter-spacing:0.35px;word-spacing:0px;">0</div>
<div class="t" id="t140" style="left:27.68px;width:800px;text-align:center;top:796.50px;font-size:13px;font-family:'Liberation Sans', sans-serif;font-weight:normal;color:#000;letter-spacing:0.35px;word-spacing:0px;">0.0</div>
<div class="t" id="t141" style="left:127.67px;width:800px;text-align:center;top:796.50px;font-size:13px;font-family:'Liberation Sans', sans-serif;font-weight:normal;color:#000;letter-spacing:0.35px;word-spacing:0px;">dBi</div>
<div class="t" id="t142" style="left:215.18px;width:800px;text-align:center;top:796.50px;font-size:13px;font-family:'Liberation Sans', sans-serif;font-weight:normal;color:#000;letter-spacing:0.35px;word-spacing:0px;">0.0</div>
<div class="t" id="t143" style="left:290.18px;width:800px;text-align:center;top:796.50px;font-size:13px;font-family:'Liberation Sans', sans-serif;font-weight:normal;color:#000;letter-spacing:0.35px;word-spacing:0px;">0.0</div>
<div style="position:absolute;left:53px;top:807px;width:885px;height:21px;background:#f4f4f4"></div>
<div style="position:absolute;left:4px;top:807px;width:48px;height:21px;background:linear-gradient(90deg,#dfe8f4 0%,#dbe5f2 60%,#c3d1e5 100%)"></div>
<div style="position:absolute;left:4px;top:807px;width:48px;height:1px;background:#eef3fa"></div>
<div style="position:absolute;left:4px;top:828px;width:48px;height:1px;background:#8098b8"></div>
<div style="position:absolute;left:53px;top:828px;width:1006px;height:1px;background:#a2d4ea"></div>
<div class="t" id="t144" style="left:-372.00px;width:800px;text-align:center;top:818.52px;font-size:11.5px;font-family:'Liberation Sans', sans-serif;font-weight:normal;color:#55208e;letter-spacing:0px;word-spacing:0px;">12</div>
<div class="t" id="n11" style="left:54px;top:818.50px;font-size:13px;font-family:'Liberation Sans', sans-serif;font-weight:normal;color:#000;letter-spacing:0.4px;word-spacing:0px;"></div>
<div class="t" id="t146" style="left:-72.33px;width:800px;text-align:center;top:818.50px;font-size:13px;font-family:'Liberation Sans', sans-serif;font-weight:normal;color:#000;letter-spacing:0.35px;word-spacing:0px;">0</div>
<div class="t" id="t147" style="left:27.68px;width:800px;text-align:center;top:818.50px;font-size:13px;font-family:'Liberation Sans', sans-serif;font-weight:normal;color:#000;letter-spacing:0.35px;word-spacing:0px;">0.0</div>
<div class="t" id="t148" style="left:127.67px;width:800px;text-align:center;top:818.50px;font-size:13px;font-family:'Liberation Sans', sans-serif;font-weight:normal;color:#000;letter-spacing:0.35px;word-spacing:0px;">dBi</div>
<div class="t" id="t149" style="left:215.18px;width:800px;text-align:center;top:818.50px;font-size:13px;font-family:'Liberation Sans', sans-serif;font-weight:normal;color:#000;letter-spacing:0.35px;word-spacing:0px;">0.0</div>
<div class="t" id="t150" style="left:290.18px;width:800px;text-align:center;top:818.50px;font-size:13px;font-family:'Liberation Sans', sans-serif;font-weight:normal;color:#000;letter-spacing:0.35px;word-spacing:0px;">0.0</div>
<div style="position:absolute;left:4px;top:829px;width:48px;height:21px;background:linear-gradient(90deg,#dfe8f4 0%,#dbe5f2 60%,#c3d1e5 100%)"></div>
<div style="position:absolute;left:4px;top:829px;width:48px;height:1px;background:#eef3fa"></div>
<div style="position:absolute;left:4px;top:850px;width:48px;height:1px;background:#8098b8"></div>
<div style="position:absolute;left:53px;top:850px;width:1006px;height:1px;background:#a2d4ea"></div>
<div class="t" id="t151" style="left:-372.00px;width:800px;text-align:center;top:840.52px;font-size:11.5px;font-family:'Liberation Sans', sans-serif;font-weight:normal;color:#55208e;letter-spacing:0px;word-spacing:0px;">13</div>
<div class="t" id="n12" style="left:54px;top:840.50px;font-size:13px;font-family:'Liberation Sans', sans-serif;font-weight:normal;color:#000;letter-spacing:0.4px;word-spacing:0px;"></div>
<div class="t" id="t153" style="left:-72.33px;width:800px;text-align:center;top:840.50px;font-size:13px;font-family:'Liberation Sans', sans-serif;font-weight:normal;color:#000;letter-spacing:0.35px;word-spacing:0px;">0</div>
<div class="t" id="t154" style="left:27.68px;width:800px;text-align:center;top:840.50px;font-size:13px;font-family:'Liberation Sans', sans-serif;font-weight:normal;color:#000;letter-spacing:0.35px;word-spacing:0px;">0.0</div>
<div class="t" id="t155" style="left:127.67px;width:800px;text-align:center;top:840.50px;font-size:13px;font-family:'Liberation Sans', sans-serif;font-weight:normal;color:#000;letter-spacing:0.35px;word-spacing:0px;">dBi</div>
<div class="t" id="t156" style="left:215.18px;width:800px;text-align:center;top:840.50px;font-size:13px;font-family:'Liberation Sans', sans-serif;font-weight:normal;color:#000;letter-spacing:0.35px;word-spacing:0px;">0.0</div>
<div class="t" id="t157" style="left:290.18px;width:800px;text-align:center;top:840.50px;font-size:13px;font-family:'Liberation Sans', sans-serif;font-weight:normal;color:#000;letter-spacing:0.35px;word-spacing:0px;">0.0</div>
<div style="position:absolute;left:53px;top:851px;width:885px;height:21px;background:#f4f4f4"></div>
<div style="position:absolute;left:4px;top:851px;width:48px;height:21px;background:linear-gradient(90deg,#dfe8f4 0%,#dbe5f2 60%,#c3d1e5 100%)"></div>
<div style="position:absolute;left:4px;top:851px;width:48px;height:1px;background:#eef3fa"></div>
<div style="position:absolute;left:4px;top:872px;width:48px;height:1px;background:#8098b8"></div>
<div style="position:absolute;left:53px;top:872px;width:1006px;height:1px;background:#a2d4ea"></div>
<div class="t" id="t158" style="left:-372.00px;width:800px;text-align:center;top:862.52px;font-size:11.5px;font-family:'Liberation Sans', sans-serif;font-weight:normal;color:#55208e;letter-spacing:0px;word-spacing:0px;">14</div>
<div class="t" id="n13" style="left:54px;top:862.50px;font-size:13px;font-family:'Liberation Sans', sans-serif;font-weight:normal;color:#000;letter-spacing:0.4px;word-spacing:0px;"></div>
<div class="t" id="t160" style="left:-72.33px;width:800px;text-align:center;top:862.50px;font-size:13px;font-family:'Liberation Sans', sans-serif;font-weight:normal;color:#000;letter-spacing:0.35px;word-spacing:0px;">0</div>
<div class="t" id="t161" style="left:27.68px;width:800px;text-align:center;top:862.50px;font-size:13px;font-family:'Liberation Sans', sans-serif;font-weight:normal;color:#000;letter-spacing:0.35px;word-spacing:0px;">0.0</div>
<div class="t" id="t162" style="left:127.67px;width:800px;text-align:center;top:862.50px;font-size:13px;font-family:'Liberation Sans', sans-serif;font-weight:normal;color:#000;letter-spacing:0.35px;word-spacing:0px;">dBi</div>
<div class="t" id="t163" style="left:215.18px;width:800px;text-align:center;top:862.50px;font-size:13px;font-family:'Liberation Sans', sans-serif;font-weight:normal;color:#000;letter-spacing:0.35px;word-spacing:0px;">0.0</div>
<div class="t" id="t164" style="left:290.18px;width:800px;text-align:center;top:862.50px;font-size:13px;font-family:'Liberation Sans', sans-serif;font-weight:normal;color:#000;letter-spacing:0.35px;word-spacing:0px;">0.0</div>
<div style="position:absolute;left:4px;top:873px;width:48px;height:21px;background:linear-gradient(90deg,#dfe8f4 0%,#dbe5f2 60%,#c3d1e5 100%)"></div>
<div style="position:absolute;left:4px;top:873px;width:48px;height:1px;background:#eef3fa"></div>
<div style="position:absolute;left:4px;top:894px;width:48px;height:1px;background:#8098b8"></div>
<div style="position:absolute;left:53px;top:894px;width:1006px;height:1px;background:#a2d4ea"></div>
<div class="t" id="t165" style="left:-372.00px;width:800px;text-align:center;top:884.52px;font-size:11.5px;font-family:'Liberation Sans', sans-serif;font-weight:normal;color:#55208e;letter-spacing:0px;word-spacing:0px;">15</div>
<div class="t" id="n14" style="left:54px;top:884.50px;font-size:13px;font-family:'Liberation Sans', sans-serif;font-weight:normal;color:#000;letter-spacing:0.4px;word-spacing:0px;"></div>
<div class="t" id="t167" style="left:-72.33px;width:800px;text-align:center;top:884.50px;font-size:13px;font-family:'Liberation Sans', sans-serif;font-weight:normal;color:#000;letter-spacing:0.35px;word-spacing:0px;">0</div>
<div class="t" id="t168" style="left:27.68px;width:800px;text-align:center;top:884.50px;font-size:13px;font-family:'Liberation Sans', sans-serif;font-weight:normal;color:#000;letter-spacing:0.35px;word-spacing:0px;">0.0</div>
<div class="t" id="t169" style="left:127.67px;width:800px;text-align:center;top:884.50px;font-size:13px;font-family:'Liberation Sans', sans-serif;font-weight:normal;color:#000;letter-spacing:0.35px;word-spacing:0px;">dBi</div>
<div class="t" id="t170" style="left:215.18px;width:800px;text-align:center;top:884.50px;font-size:13px;font-family:'Liberation Sans', sans-serif;font-weight:normal;color:#000;letter-spacing:0.35px;word-spacing:0px;">0.0</div>
<div class="t" id="t171" style="left:290.18px;width:800px;text-align:center;top:884.50px;font-size:13px;font-family:'Liberation Sans', sans-serif;font-weight:normal;color:#000;letter-spacing:0.35px;word-spacing:0px;">0.0</div>
<div style="position:absolute;left:53px;top:895px;width:885px;height:21px;background:#f4f4f4"></div>
<div style="position:absolute;left:4px;top:895px;width:48px;height:21px;background:linear-gradient(90deg,#dfe8f4 0%,#dbe5f2 60%,#c3d1e5 100%)"></div>
<div style="position:absolute;left:4px;top:895px;width:48px;height:1px;background:#eef3fa"></div>
<div style="position:absolute;left:4px;top:916px;width:48px;height:1px;background:#8098b8"></div>
<div style="position:absolute;left:53px;top:916px;width:1006px;height:1px;background:#a2d4ea"></div>
<div class="t" id="t172" style="left:-372.00px;width:800px;text-align:center;top:906.52px;font-size:11.5px;font-family:'Liberation Sans', sans-serif;font-weight:normal;color:#55208e;letter-spacing:0px;word-spacing:0px;">16</div>
<div class="t" id="n15" style="left:54px;top:906.50px;font-size:13px;font-family:'Liberation Sans', sans-serif;font-weight:normal;color:#000;letter-spacing:0.4px;word-spacing:0px;"></div>
<div class="t" id="t174" style="left:-72.33px;width:800px;text-align:center;top:906.50px;font-size:13px;font-family:'Liberation Sans', sans-serif;font-weight:normal;color:#000;letter-spacing:0.35px;word-spacing:0px;">0</div>
<div class="t" id="t175" style="left:27.68px;width:800px;text-align:center;top:906.50px;font-size:13px;font-family:'Liberation Sans', sans-serif;font-weight:normal;color:#000;letter-spacing:0.35px;word-spacing:0px;">0.0</div>
<div class="t" id="t176" style="left:127.67px;width:800px;text-align:center;top:906.50px;font-size:13px;font-family:'Liberation Sans', sans-serif;font-weight:normal;color:#000;letter-spacing:0.35px;word-spacing:0px;">dBi</div>
<div class="t" id="t177" style="left:215.18px;width:800px;text-align:center;top:906.50px;font-size:13px;font-family:'Liberation Sans', sans-serif;font-weight:normal;color:#000;letter-spacing:0.35px;word-spacing:0px;">0.0</div>
<div class="t" id="t178" style="left:290.18px;width:800px;text-align:center;top:906.50px;font-size:13px;font-family:'Liberation Sans', sans-serif;font-weight:normal;color:#000;letter-spacing:0.35px;word-spacing:0px;">0.0</div>
<div style="position:absolute;left:4px;top:917px;width:48px;height:21px;background:linear-gradient(90deg,#dfe8f4 0%,#dbe5f2 60%,#c3d1e5 100%)"></div>
<div style="position:absolute;left:4px;top:917px;width:48px;height:1px;background:#eef3fa"></div>
<div style="position:absolute;left:4px;top:938px;width:48px;height:1px;background:#8098b8"></div>
<div style="position:absolute;left:53px;top:938px;width:1006px;height:1px;background:#a2d4ea"></div>
<div class="t" id="t179" style="left:-372.00px;width:800px;text-align:center;top:928.52px;font-size:11.5px;font-family:'Liberation Sans', sans-serif;font-weight:normal;color:#55208e;letter-spacing:0px;word-spacing:0px;">17</div>
<div class="t" id="n16" style="left:54px;top:928.50px;font-size:13px;font-family:'Liberation Sans', sans-serif;font-weight:normal;color:#000;letter-spacing:0.4px;word-spacing:0px;"></div>
<div class="t" id="t181" style="left:-72.33px;width:800px;text-align:center;top:928.50px;font-size:13px;font-family:'Liberation Sans', sans-serif;font-weight:normal;color:#000;letter-spacing:0.35px;word-spacing:0px;">0</div>
<div class="t" id="t182" style="left:27.68px;width:800px;text-align:center;top:928.50px;font-size:13px;font-family:'Liberation Sans', sans-serif;font-weight:normal;color:#000;letter-spacing:0.35px;word-spacing:0px;">0.0</div>
<div class="t" id="t183" style="left:127.67px;width:800px;text-align:center;top:928.50px;font-size:13px;font-family:'Liberation Sans', sans-serif;font-weight:normal;color:#000;letter-spacing:0.35px;word-spacing:0px;">dBi</div>
<div class="t" id="t184" style="left:215.18px;width:800px;text-align:center;top:928.50px;font-size:13px;font-family:'Liberation Sans', sans-serif;font-weight:normal;color:#000;letter-spacing:0.35px;word-spacing:0px;">0.0</div>
<div class="t" id="t185" style="left:290.18px;width:800px;text-align:center;top:928.50px;font-size:13px;font-family:'Liberation Sans', sans-serif;font-weight:normal;color:#000;letter-spacing:0.35px;word-spacing:0px;">0.0</div>
<div style="position:absolute;left:53px;top:939px;width:885px;height:21px;background:#f4f4f4"></div>
<div style="position:absolute;left:4px;top:939px;width:48px;height:21px;background:linear-gradient(90deg,#dfe8f4 0%,#dbe5f2 60%,#c3d1e5 100%)"></div>
<div style="position:absolute;left:4px;top:939px;width:48px;height:1px;background:#eef3fa"></div>
<div style="position:absolute;left:4px;top:960px;width:48px;height:1px;background:#8098b8"></div>
<div style="position:absolute;left:53px;top:960px;width:1006px;height:1px;background:#a2d4ea"></div>
<div class="t" id="t186" style="left:-372.00px;width:800px;text-align:center;top:950.52px;font-size:11.5px;font-family:'Liberation Sans', sans-serif;font-weight:normal;color:#55208e;letter-spacing:0px;word-spacing:0px;">18</div>
<div class="t" id="n17" style="left:54px;top:950.50px;font-size:13px;font-family:'Liberation Sans', sans-serif;font-weight:normal;color:#000;letter-spacing:0.4px;word-spacing:0px;"></div>
<div class="t" id="t188" style="left:-72.33px;width:800px;text-align:center;top:950.50px;font-size:13px;font-family:'Liberation Sans', sans-serif;font-weight:normal;color:#000;letter-spacing:0.35px;word-spacing:0px;">0</div>
<div class="t" id="t189" style="left:27.68px;width:800px;text-align:center;top:950.50px;font-size:13px;font-family:'Liberation Sans', sans-serif;font-weight:normal;color:#000;letter-spacing:0.35px;word-spacing:0px;">0.0</div>
<div class="t" id="t190" style="left:127.67px;width:800px;text-align:center;top:950.50px;font-size:13px;font-family:'Liberation Sans', sans-serif;font-weight:normal;color:#000;letter-spacing:0.35px;word-spacing:0px;">dBi</div>
<div class="t" id="t191" style="left:215.18px;width:800px;text-align:center;top:950.50px;font-size:13px;font-family:'Liberation Sans', sans-serif;font-weight:normal;color:#000;letter-spacing:0.35px;word-spacing:0px;">0.0</div>
<div class="t" id="t192" style="left:290.18px;width:800px;text-align:center;top:950.50px;font-size:13px;font-family:'Liberation Sans', sans-serif;font-weight:normal;color:#000;letter-spacing:0.35px;word-spacing:0px;">0.0</div>
<div style="position:absolute;left:4px;top:961px;width:48px;height:21px;background:linear-gradient(90deg,#dfe8f4 0%,#dbe5f2 60%,#c3d1e5 100%)"></div>
<div style="position:absolute;left:4px;top:961px;width:48px;height:1px;background:#eef3fa"></div>
<div style="position:absolute;left:4px;top:982px;width:48px;height:1px;background:#8098b8"></div>
<div style="position:absolute;left:53px;top:982px;width:1006px;height:1px;background:#a2d4ea"></div>
<div class="t" id="t193" style="left:-372.00px;width:800px;text-align:center;top:972.52px;font-size:11.5px;font-family:'Liberation Sans', sans-serif;font-weight:normal;color:#55208e;letter-spacing:0px;word-spacing:0px;">19</div>
<div class="t" id="n18" style="left:54px;top:972.50px;font-size:13px;font-family:'Liberation Sans', sans-serif;font-weight:normal;color:#000;letter-spacing:0.4px;word-spacing:0px;"></div>
<div class="t" id="t195" style="left:-72.33px;width:800px;text-align:center;top:972.50px;font-size:13px;font-family:'Liberation Sans', sans-serif;font-weight:normal;color:#000;letter-spacing:0.35px;word-spacing:0px;">0</div>
<div class="t" id="t196" style="left:27.68px;width:800px;text-align:center;top:972.50px;font-size:13px;font-family:'Liberation Sans', sans-serif;font-weight:normal;color:#000;letter-spacing:0.35px;word-spacing:0px;">0.0</div>
<div class="t" id="t197" style="left:127.67px;width:800px;text-align:center;top:972.50px;font-size:13px;font-family:'Liberation Sans', sans-serif;font-weight:normal;color:#000;letter-spacing:0.35px;word-spacing:0px;">dBi</div>
<div class="t" id="t198" style="left:215.18px;width:800px;text-align:center;top:972.50px;font-size:13px;font-family:'Liberation Sans', sans-serif;font-weight:normal;color:#000;letter-spacing:0.35px;word-spacing:0px;">0.0</div>
<div class="t" id="t199" style="left:290.18px;width:800px;text-align:center;top:972.50px;font-size:13px;font-family:'Liberation Sans', sans-serif;font-weight:normal;color:#000;letter-spacing:0.35px;word-spacing:0px;">0.0</div>
<div style="position:absolute;left:53px;top:983px;width:885px;height:21px;background:#f4f4f4"></div>
<div style="position:absolute;left:4px;top:983px;width:48px;height:21px;background:linear-gradient(90deg,#dfe8f4 0%,#dbe5f2 60%,#c3d1e5 100%)"></div>
<div style="position:absolute;left:4px;top:983px;width:48px;height:1px;background:#eef3fa"></div>
<div style="position:absolute;left:4px;top:1004px;width:48px;height:1px;background:#8098b8"></div>
<div style="position:absolute;left:53px;top:1004px;width:1006px;height:1px;background:#a2d4ea"></div>
<div class="t" id="t200" style="left:-372.00px;width:800px;text-align:center;top:994.52px;font-size:11.5px;font-family:'Liberation Sans', sans-serif;font-weight:normal;color:#55208e;letter-spacing:0px;word-spacing:0px;">20</div>
<div class="t" id="n19" style="left:54px;top:994.50px;font-size:13px;font-family:'Liberation Sans', sans-serif;font-weight:normal;color:#000;letter-spacing:0.4px;word-spacing:0px;"></div>
<div class="t" id="t202" style="left:-72.33px;width:800px;text-align:center;top:994.50px;font-size:13px;font-family:'Liberation Sans', sans-serif;font-weight:normal;color:#000;letter-spacing:0.35px;word-spacing:0px;">0</div>
<div class="t" id="t203" style="left:27.68px;width:800px;text-align:center;top:994.50px;font-size:13px;font-family:'Liberation Sans', sans-serif;font-weight:normal;color:#000;letter-spacing:0.35px;word-spacing:0px;">0.0</div>
<div class="t" id="t204" style="left:127.67px;width:800px;text-align:center;top:994.50px;font-size:13px;font-family:'Liberation Sans', sans-serif;font-weight:normal;color:#000;letter-spacing:0.35px;word-spacing:0px;">dBi</div>
<div class="t" id="t205" style="left:215.18px;width:800px;text-align:center;top:994.50px;font-size:13px;font-family:'Liberation Sans', sans-serif;font-weight:normal;color:#000;letter-spacing:0.35px;word-spacing:0px;">0.0</div>
<div class="t" id="t206" style="left:290.18px;width:800px;text-align:center;top:994.50px;font-size:13px;font-family:'Liberation Sans', sans-serif;font-weight:normal;color:#000;letter-spacing:0.35px;word-spacing:0px;">0.0</div>
<div style="position:absolute;left:4px;top:1005px;width:48px;height:21px;background:linear-gradient(90deg,#dfe8f4 0%,#dbe5f2 60%,#c3d1e5 100%)"></div>
<div style="position:absolute;left:4px;top:1005px;width:48px;height:1px;background:#eef3fa"></div>
<div style="position:absolute;left:4px;top:1026px;width:48px;height:1px;background:#8098b8"></div>
<div style="position:absolute;left:53px;top:1026px;width:1006px;height:1px;background:#a2d4ea"></div>
<div class="t" id="t207" style="left:-372.00px;width:800px;text-align:center;top:1016.52px;font-size:11.5px;font-family:'Liberation Sans', sans-serif;font-weight:normal;color:#55208e;letter-spacing:0px;word-spacing:0px;">21</div>
<div class="t" id="n20" style="left:54px;top:1016.50px;font-size:13px;font-family:'Liberation Sans', sans-serif;font-weight:normal;color:#000;letter-spacing:0.4px;word-spacing:0px;"></div>
<div class="t" id="t209" style="left:-72.33px;width:800px;text-align:center;top:1016.50px;font-size:13px;font-family:'Liberation Sans', sans-serif;font-weight:normal;color:#000;letter-spacing:0.35px;word-spacing:0px;">0</div>
<div class="t" id="t210" style="left:27.68px;width:800px;text-align:center;top:1016.50px;font-size:13px;font-family:'Liberation Sans', sans-serif;font-weight:normal;color:#000;letter-spacing:0.35px;word-spacing:0px;">0.0</div>
<div class="t" id="t211" style="left:127.67px;width:800px;text-align:center;top:1016.50px;font-size:13px;font-family:'Liberation Sans', sans-serif;font-weight:normal;color:#000;letter-spacing:0.35px;word-spacing:0px;">dBi</div>
<div class="t" id="t212" style="left:215.18px;width:800px;text-align:center;top:1016.50px;font-size:13px;font-family:'Liberation Sans', sans-serif;font-weight:normal;color:#000;letter-spacing:0.35px;word-spacing:0px;">0.0</div>
<div class="t" id="t213" style="left:290.18px;width:800px;text-align:center;top:1016.50px;font-size:13px;font-family:'Liberation Sans', sans-serif;font-weight:normal;color:#000;letter-spacing:0.35px;word-spacing:0px;">0.0</div>
<div style="position:absolute;left:53px;top:1027px;width:885px;height:21px;background:#f4f4f4"></div>
<div style="position:absolute;left:4px;top:1027px;width:48px;height:21px;background:linear-gradient(90deg,#dfe8f4 0%,#dbe5f2 60%,#c3d1e5 100%)"></div>
<div style="position:absolute;left:4px;top:1027px;width:48px;height:1px;background:#eef3fa"></div>
<div style="position:absolute;left:4px;top:1048px;width:48px;height:1px;background:#8098b8"></div>
<div style="position:absolute;left:53px;top:1048px;width:1006px;height:1px;background:#a2d4ea"></div>
<div class="t" id="t214" style="left:-372.00px;width:800px;text-align:center;top:1038.52px;font-size:11.5px;font-family:'Liberation Sans', sans-serif;font-weight:normal;color:#55208e;letter-spacing:0px;word-spacing:0px;">22</div>
<div class="t" id="n21" style="left:54px;top:1038.50px;font-size:13px;font-family:'Liberation Sans', sans-serif;font-weight:normal;color:#000;letter-spacing:0.4px;word-spacing:0px;"></div>
<div class="t" id="t216" style="left:-72.33px;width:800px;text-align:center;top:1038.50px;font-size:13px;font-family:'Liberation Sans', sans-serif;font-weight:normal;color:#000;letter-spacing:0.35px;word-spacing:0px;">0</div>
<div class="t" id="t217" style="left:27.68px;width:800px;text-align:center;top:1038.50px;font-size:13px;font-family:'Liberation Sans', sans-serif;font-weight:normal;color:#000;letter-spacing:0.35px;word-spacing:0px;">0.0</div>
<div class="t" id="t218" style="left:127.67px;width:800px;text-align:center;top:1038.50px;font-size:13px;font-family:'Liberation Sans', sans-serif;font-weight:normal;color:#000;letter-spacing:0.35px;word-spacing:0px;">dBi</div>
<div class="t" id="t219" style="left:215.18px;width:800px;text-align:center;top:1038.50px;font-size:13px;font-family:'Liberation Sans', sans-serif;font-weight:normal;color:#000;letter-spacing:0.35px;word-spacing:0px;">0.0</div>
<div class="t" id="t220" style="left:290.18px;width:800px;text-align:center;top:1038.50px;font-size:13px;font-family:'Liberation Sans', sans-serif;font-weight:normal;color:#000;letter-spacing:0.35px;word-spacing:0px;">0.0</div>
<div style="position:absolute;left:4px;top:1049px;width:48px;height:21px;background:linear-gradient(90deg,#dfe8f4 0%,#dbe5f2 60%,#c3d1e5 100%)"></div>
<div style="position:absolute;left:4px;top:1049px;width:48px;height:1px;background:#eef3fa"></div>
<div style="position:absolute;left:4px;top:1070px;width:48px;height:1px;background:#8098b8"></div>
<div style="position:absolute;left:53px;top:1070px;width:1006px;height:1px;background:#a2d4ea"></div>
<div class="t" id="t221" style="left:-372.00px;width:800px;text-align:center;top:1060.52px;font-size:11.5px;font-family:'Liberation Sans', sans-serif;font-weight:normal;color:#55208e;letter-spacing:0px;word-spacing:0px;">23</div>
<div class="t" id="n22" style="left:54px;top:1060.50px;font-size:13px;font-family:'Liberation Sans', sans-serif;font-weight:normal;color:#000;letter-spacing:0.4px;word-spacing:0px;"></div>
<div class="t" id="t223" style="left:-72.33px;width:800px;text-align:center;top:1060.50px;font-size:13px;font-family:'Liberation Sans', sans-serif;font-weight:normal;color:#000;letter-spacing:0.35px;word-spacing:0px;">0</div>
<div class="t" id="t224" style="left:27.68px;width:800px;text-align:center;top:1060.50px;font-size:13px;font-family:'Liberation Sans', sans-serif;font-weight:normal;color:#000;letter-spacing:0.35px;word-spacing:0px;">0.0</div>
<div class="t" id="t225" style="left:127.67px;width:800px;text-align:center;top:1060.50px;font-size:13px;font-family:'Liberation Sans', sans-serif;font-weight:normal;color:#000;letter-spacing:0.35px;word-spacing:0px;">dBi</div>
<div class="t" id="t226" style="left:215.18px;width:800px;text-align:center;top:1060.50px;font-size:13px;font-family:'Liberation Sans', sans-serif;font-weight:normal;color:#000;letter-spacing:0.35px;word-spacing:0px;">0.0</div>
<div class="t" id="t227" style="left:290.18px;width:800px;text-align:center;top:1060.50px;font-size:13px;font-family:'Liberation Sans', sans-serif;font-weight:normal;color:#000;letter-spacing:0.35px;word-spacing:0px;">0.0</div>
<div style="position:absolute;left:53px;top:1071px;width:885px;height:21px;background:#f4f4f4"></div>
<div style="position:absolute;left:4px;top:1071px;width:48px;height:21px;background:linear-gradient(90deg,#dfe8f4 0%,#dbe5f2 60%,#c3d1e5 100%)"></div>
<div style="position:absolute;left:4px;top:1071px;width:48px;height:1px;background:#eef3fa"></div>
<div style="position:absolute;left:4px;top:1092px;width:48px;height:1px;background:#8098b8"></div>
<div style="position:absolute;left:53px;top:1092px;width:1006px;height:1px;background:#a2d4ea"></div>
<div class="t" id="t228" style="left:-372.00px;width:800px;text-align:center;top:1082.52px;font-size:11.5px;font-family:'Liberation Sans', sans-serif;font-weight:normal;color:#55208e;letter-spacing:0px;word-spacing:0px;">24</div>
<div class="t" id="n23" style="left:54px;top:1082.50px;font-size:13px;font-family:'Liberation Sans', sans-serif;font-weight:normal;color:#000;letter-spacing:0.4px;word-spacing:0px;"></div>
<div class="t" id="t230" style="left:-72.33px;width:800px;text-align:center;top:1082.50px;font-size:13px;font-family:'Liberation Sans', sans-serif;font-weight:normal;color:#000;letter-spacing:0.35px;word-spacing:0px;">0</div>
<div class="t" id="t231" style="left:27.68px;width:800px;text-align:center;top:1082.50px;font-size:13px;font-family:'Liberation Sans', sans-serif;font-weight:normal;color:#000;letter-spacing:0.35px;word-spacing:0px;">0.0</div>
<div class="t" id="t232" style="left:127.67px;width:800px;text-align:center;top:1082.50px;font-size:13px;font-family:'Liberation Sans', sans-serif;font-weight:normal;color:#000;letter-spacing:0.35px;word-spacing:0px;">dBi</div>
<div class="t" id="t233" style="left:215.18px;width:800px;text-align:center;top:1082.50px;font-size:13px;font-family:'Liberation Sans', sans-serif;font-weight:normal;color:#000;letter-spacing:0.35px;word-spacing:0px;">0.0</div>
<div class="t" id="t234" style="left:290.18px;width:800px;text-align:center;top:1082.50px;font-size:13px;font-family:'Liberation Sans', sans-serif;font-weight:normal;color:#000;letter-spacing:0.35px;word-spacing:0px;">0.0</div>
<div style="position:absolute;left:4px;top:1093px;width:48px;height:21px;background:linear-gradient(90deg,#dfe8f4 0%,#dbe5f2 60%,#c3d1e5 100%)"></div>
<div style="position:absolute;left:4px;top:1093px;width:48px;height:1px;background:#eef3fa"></div>
<div style="position:absolute;left:4px;top:1114px;width:48px;height:1px;background:#8098b8"></div>
<div style="position:absolute;left:53px;top:1114px;width:1006px;height:1px;background:#a2d4ea"></div>
<div class="t" id="t235" style="left:-372.00px;width:800px;text-align:center;top:1104.52px;font-size:11.5px;font-family:'Liberation Sans', sans-serif;font-weight:normal;color:#55208e;letter-spacing:0px;word-spacing:0px;">25</div>
<div class="t" id="n24" style="left:54px;top:1104.50px;font-size:13px;font-family:'Liberation Sans', sans-serif;font-weight:normal;color:#000;letter-spacing:0.4px;word-spacing:0px;"></div>
<div class="t" id="t237" style="left:-72.33px;width:800px;text-align:center;top:1104.50px;font-size:13px;font-family:'Liberation Sans', sans-serif;font-weight:normal;color:#000;letter-spacing:0.35px;word-spacing:0px;">0</div>
<div class="t" id="t238" style="left:27.68px;width:800px;text-align:center;top:1104.50px;font-size:13px;font-family:'Liberation Sans', sans-serif;font-weight:normal;color:#000;letter-spacing:0.35px;word-spacing:0px;">0.0</div>
<div class="t" id="t239" style="left:127.67px;width:800px;text-align:center;top:1104.50px;font-size:13px;font-family:'Liberation Sans', sans-serif;font-weight:normal;color:#000;letter-spacing:0.35px;word-spacing:0px;">dBi</div>
<div class="t" id="t240" style="left:215.18px;width:800px;text-align:center;top:1104.50px;font-size:13px;font-family:'Liberation Sans', sans-serif;font-weight:normal;color:#000;letter-spacing:0.35px;word-spacing:0px;">0.0</div>
<div class="t" id="t241" style="left:290.18px;width:800px;text-align:center;top:1104.50px;font-size:13px;font-family:'Liberation Sans', sans-serif;font-weight:normal;color:#000;letter-spacing:0.35px;word-spacing:0px;">0.0</div>
<div style="position:absolute;left:52px;top:565px;width:1px;height:550px;background:#8098b8"></div>
<div style="position:absolute;left:277px;top:565px;width:1px;height:550px;background:#a2d4ea"></div>
<div style="position:absolute;left:377px;top:565px;width:1px;height:550px;background:#a2d4ea"></div>
<div style="position:absolute;left:477px;top:565px;width:1px;height:550px;background:#a2d4ea"></div>
<div style="position:absolute;left:577px;top:565px;width:1px;height:550px;background:#a2d4ea"></div>
<div style="position:absolute;left:652px;top:565px;width:1px;height:550px;background:#a2d4ea"></div>
<div style="position:absolute;left:727px;top:565px;width:1px;height:550px;background:#a2d4ea"></div>
<div style="position:absolute;left:837px;top:565px;width:1px;height:550px;background:#a2d4ea"></div>
<div style="position:absolute;left:937px;top:565px;width:1px;height:550px;background:#a2d4ea"></div>
<svg style="position:absolute;left:7px;top:572px" width="5" height="8"><path d="M0 0 L5 4 L0 8 Z" fill="#ff0000"/></svg>
<div style="position:absolute;left:3px;top:1148px;width:1057px;height:1px;background:#8aa4bc"></div>
<div style="position:absolute;left:0px;top:1149px;width:1251px;height:3px;background:#000"></div>
<div style="position:absolute;left:0px;top:1152px;width:1251px;height:63px;background:#000"></div>
<div style="position:absolute;left:1px;top:1152px;width:1249px;height:62px;background:#ffffff"></div>
<div class="t" id="c1" style="left:228.17px;width:800px;text-align:center;top:1173.46px;font-size:16px;font-family:'Liberation Sans', sans-serif;font-weight:bold;color:#000;letter-spacing:1.333px;word-spacing:0px;-webkit-text-stroke:0.4px #000">RadiantTxl - Antenna Type Editor</div>
<div class="t" id="c2" style="left:225.64px;width:800px;text-align:center;top:1196.46px;font-size:16px;font-family:'Liberation Sans', sans-serif;font-weight:bold;color:#000;letter-spacing:1.284px;word-spacing:0px;-webkit-text-stroke:0.4px #000">Create your antenna types or import from Pathanal 5 Antenna Files</div>
</body></html>
